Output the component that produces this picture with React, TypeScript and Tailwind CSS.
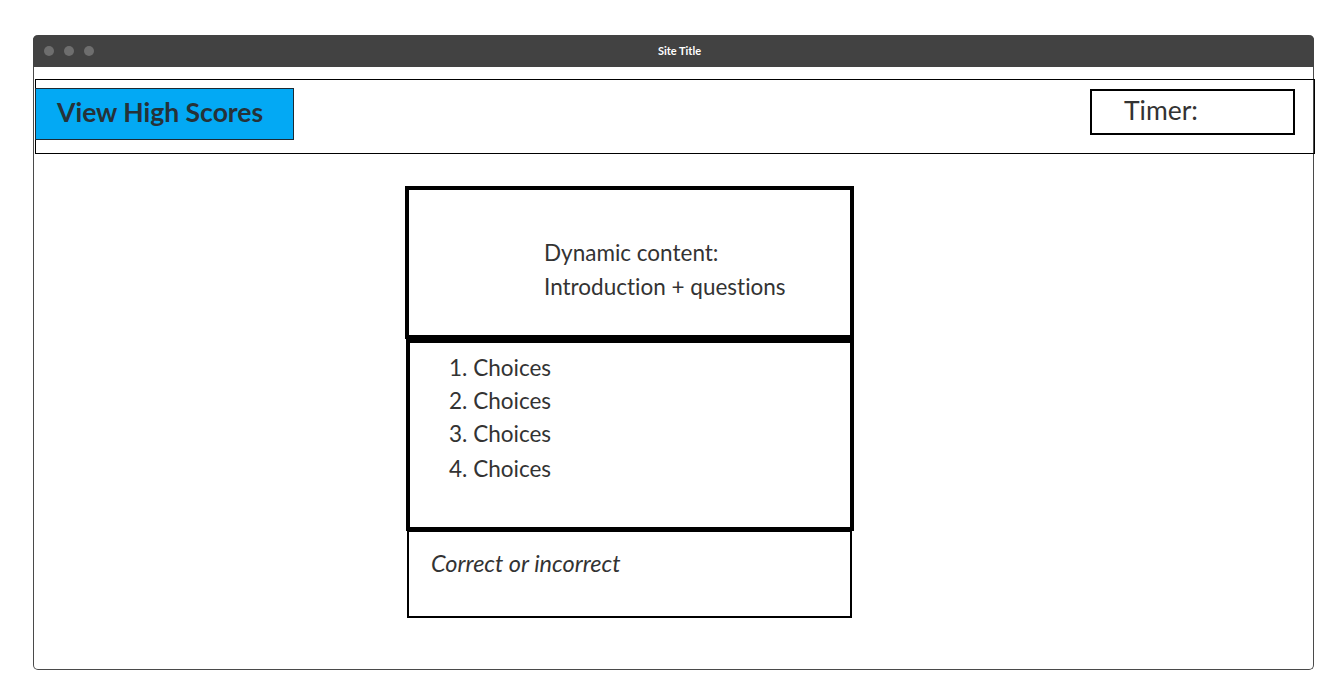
import React from 'react';

const CHOICES = ['Choices', 'Choices', 'Choices', 'Choices'];

const App: React.FC = () => {
  return (
    <div className="min-h-screen w-full bg-white pl-[33px] pt-[35px] font-['Lato','Open_Sans',sans-serif] [font-variant-ligatures:none]">
      {/* Browser window */}
      <div className="flex h-[635px] w-[1281px] flex-col rounded-[5px] border border-[#4a4a4a] border-t-0">
        {/* Title bar */}
        <div className="relative flex h-[32px] items-center rounded-t-[5px] bg-[#424242] px-[10px] -mx-px">
          <div className="flex gap-[10px] pl-[1px]">
            <span className="h-[10px] w-[10px] rounded-full bg-[#6e6e6e]" />
            <span className="h-[10px] w-[10px] rounded-full bg-[#6e6e6e]" />
            <span className="h-[10px] w-[10px] rounded-full bg-[#6e6e6e]" />
          </div>
          <span className="absolute left-0 right-0 top-[8px] pl-[12px] text-center text-[11px] font-bold text-white">
            Site Title
          </span>
        </div>

        {/* Header */}
        <div className="mt-[12px] ml-px mr-[-2px] flex h-[75px] items-start justify-between border border-black">
          <button className="mt-[8px] h-[52px] w-[259px] -ml-px border border-[#1c2a33] bg-[#03a9f4] pb-[3px] pl-[21px] text-left text-[26.5px] font-bold text-[#263238]">
            View High Scores
          </button>
          <div className="mr-[19px] mt-[9px] flex h-[46px] w-[205px] items-center border-2 border-black pb-[2px] pl-[32px] text-[26.5px] text-[#333]">
            Timer:
          </div>
        </div>

        {/* Quiz column */}
        <div className="ml-[371px] mt-[32px] flex w-[449px] flex-col text-[22.5px] text-[#333]">
          <div className="flex h-[153px] flex-col justify-center border-[4px] border-black pl-[135px] pt-[14px] leading-[34px]">
            <span>Dynamic content:</span>
            <span>Introduction + questions</span>
          </div>
          <div className="ml-px h-[192px] border-[4px] border-black pl-[39px] pt-[8px] leading-[33px]">
            <ol className="flex flex-col">
              {CHOICES.map((c, i) => (
                <li key={i} className={i === 3 ? 'mt-[2px]' : ''}>
                  {i + 1}. {c}
                </li>
              ))}
            </ol>
          </div>
          <div className="ml-[2px] -mt-px h-[88px] w-[445px] border-2 border-black pl-[22px] pt-[14px] text-[23.5px] italic">
            Correct or incorrect
          </div>
        </div>
      </div>
    </div>
  );
};

export default App;
